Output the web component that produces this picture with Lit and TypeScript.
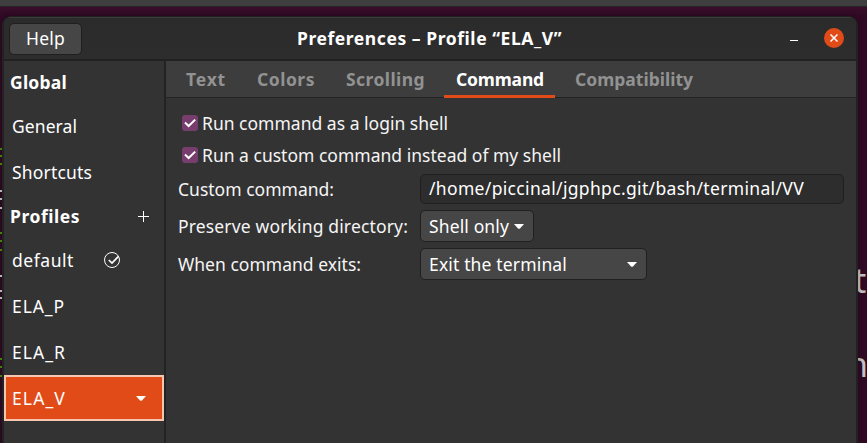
import { LitElement, html, css, svg } from "lit";
import { customElement, property } from "lit/decorators.js";

/** Single-line label whose tracking is adjusted to fill a given width. */
@customElement("fit-label")
class FitLabel extends LitElement {
  @property() text = "";
  @property({ type: Number }) width = 0;
  static styles = css`
    :host { display: inline-block; white-space: pre; flex: none; }
  `;
  async updated() {
    await document.fonts.ready;
    const s = this.renderRoot.querySelector("span") as HTMLElement;
    s.style.letterSpacing = "0";
    const natural = s.getBoundingClientRect().width;
    s.style.letterSpacing = (this.width - natural) / this.text.length + "px";
  }
  render() {
    return html`<span>${this.text}</span>`;
  }
}

const label = (text: string, width: number) =>
  html`<fit-label .text=${text} .width=${width}></fit-label>`;

const caret = html`<svg class="caret" width="10" height="5" viewBox="0 0 10 5">
  ${svg`<path d="M0 0H10L6 4.4Q5 5.2 4 4.4Z" fill="#fff"/>`}
</svg>`;

const tick = html`<svg class="tick" width="16" height="16" viewBox="0 0 16 16">
  <path d="M3 7.5L6.6 11L13.2 4.6" fill="none" stroke="#fff" stroke-width="2"/>
</svg>`;

@customElement("app-root")
class AppRoot extends LitElement {
  static styles = css`
    :host {
      display: block; position: relative; width: 867px; height: 443px; overflow: hidden;
      background: #300a24; color: #fff;
      font: 17.5px/24px "Noto Sans", "Open Sans", sans-serif;
    }
    * { box-sizing: border-box; }
    svg { display: block; flex: none; }
    .topbar { height: 7px; background: #3e3e3e; border-bottom: 1px solid #252525; }
    .shade { height: 9px; background: linear-gradient(#390d2b, #300a24); }
    .behind { position: absolute; color: #c4c0c3; font-size: 34px; line-height: 40px; }
    .t { left: 854px; top: 260px; }
    .n { left: 847px; top: 344px; }
    .dash { position: absolute; left: 0; width: 2px; height: 2px; background: #b9b4b8; }
    .dash.g { background: #458009; }
    .window {
      position: relative; width: 856px; height: 427px; margin-left: 2px;
      display: flex; flex-direction: column;
      border: 2px solid #222; border-top: 1px solid #202020; border-bottom: 0;
      border-radius: 9px 9px 0 0; background: #333; overflow: hidden;
      box-shadow: 0 0 5px rgba(0, 0, 0, .3);
    }
    .header {
      height: 44px; flex: none; display: flex; align-items: center;
      background: linear-gradient(#2b2b2b, #2d2d2d);
      border-top: 1px solid #3b3b3b; border-bottom: 2px solid #212121;
      padding: 0 12px 0 5px;
    }
    .help {
      width: 73px; height: 32px; padding: 0 0 2px 16px;
      display: flex; align-items: center;
      border: 1px solid #1f1f1f; border-radius: 5px; background: #464646;
    }
    .title { margin-left: 215px; padding-bottom: 2px; font-weight: 700; display: flex; }
    .min { width: 8px; height: 1px; background: #fff; margin: 4px 0 0 auto; }
    .close {
      width: 20px; height: 20px; margin: 0 0 1px 26px; border-radius: 50%;
      background: #e14b18; display: grid; place-items: center;
    }
    .body { flex: 1; display: flex; min-height: 0; }
    .side { width: 162px; flex: none; border-right: 2px solid #232323; }
    .head { height: 42px; padding-left: 6px; display: flex; align-items: center; font-weight: 700; }
    .head.add { padding-right: 14px; justify-content: space-between; }
    .head svg { margin-top: 2px; }
    .row { height: 46px; padding-left: 8px; display: flex; align-items: center; }
    .row.sel { background: #e14b18; border: 2px solid #f6c6b1; padding: 0 16px 0 6px; justify-content: space-between; }
    .def { margin-left: 30px; }
    .main { flex: 1; }
    .tabs {
      display: flex; gap: 8px; height: 37px; padding-left: 8px;
      background: #3d3d3d; border-bottom: 1px solid #232323;
    }
    .tab { height: 37px; padding: 0 11px 2px 12px; display: flex; align-items: center; font-weight: 700; color: #929292; }
    .tab.on { color: #fff; box-shadow: inset 0 -3px #e14b18; }
    .check { display: flex; align-items: center; gap: 4px; height: 32px; padding-left: 4px; }
    .tick { background: #763d6d; border-radius: 3px; }
    .form { padding: 9px 12px 0; color: #f5f5f5; }
    .grid { display: grid; grid-template-columns: 242px 1fr; row-gap: 6px; margin-top: 3px; align-items: center; }
    .entry {
      height: 30px; width: 424px; padding: 0 0 2px 8px; display: flex; align-items: center;
      background: #2d2d2d; border: 1px solid #202020; border-radius: 5px; color: #fff;
    }
    .combo {
      height: 32px; width: 114px; padding: 0 9px 0 8px; display: flex; align-items: center; justify-content: space-between;
      background: #464646; border: 1px solid #202020; border-radius: 5px; color: #fff;
    }
    .wide { width: 227px; }
  `;

  render() {
    const tabs: [string, number][] = [
      ["Text", 40], ["Colors", 58], ["Scrolling", 79], ["Command", 88], ["Compatibility", 118],
    ];
    const dashes = [[148, 1], [155, 1], [163, 1], [190, 0], [198, 0], [207, 0], [232, 1], [240, 1], [249, 1], [275, 0], [290, 0], [297, 0], [358, 1], [366, 1], [375, 1]];
    return html`
      <div class="topbar"></div>
      <div class="shade"></div>
      <span class="behind t">t</span><span class="behind n">n</span>
      <div class="window">
        <div class="header">
          <div class="help">${label("Help", 39)}</div>
          <div class="title">${label("Preferences – Profile “ELA_V”", 265)}</div>
          <div class="min"></div>
          <div class="close">
            <svg width="8" height="8" viewBox="0 0 8 8"><path d="M.5 .5L7.5 7.5M7.5 .5L.5 7.5" stroke="#fff" stroke-width="1.5"/></svg>
          </div>
        </div>
        <div class="body">
          <div class="side">
            <div class="head">${label("Global", 57)}</div>
            <div class="row">${label("General", 65)}</div>
            <div class="row">${label("Shortcuts", 80)}</div>
            <div class="head add">${label("Profiles", 70)}
              <svg width="12" height="12" viewBox="0 0 12 12"><path d="M5.5 0V11M0 5.5H11" stroke="#fff"/></svg>
            </div>
            <div class="row">${label("default", 62)}
              <svg class="def" width="16" height="16" viewBox="0 0 16 16" fill="none" stroke="#fff">
                <circle cx="8" cy="8" r="7.5"/><path d="M4.8 8L8 11L14.2 4.6" stroke-width="1.7"/>
              </svg>
            </div>
            <div class="row">${label("ELA_P", 53)}</div>
            <div class="row">${label("ELA_R", 54)}</div>
            <div class="row sel">${label("ELA_V", 54)}${caret}</div>
          </div>
          <div class="main">
            <div class="tabs">
              ${tabs.map(([t, w], i) => html`<div class="tab ${i === 3 ? "on" : ""}">${label(t, w)}</div>`)}
            </div>
            <div class="form">
              <div class="check">${tick}${label("Run command as a login shell", 246)}</div>
              <div class="check">${tick}${label("Run a custom command instead of my shell", 359)}</div>
              <div class="grid">
                ${label("Custom command:", 156)}
                <div class="entry">${label("/home/piccinal/jgphpc.git/bash/terminal/VV", 375)}</div>
                ${label("Preserve working directory:", 230)}
                <div class="combo">${label("Shell only", 80)}${caret}</div>
                ${label("When command exits:", 183)}
                <div class="combo wide">${label("Exit the terminal", 138)}${caret}</div>
              </div>
            </div>
          </div>
        </div>
      </div>
      ${dashes.map(([y, g]) => html`<i class="dash ${g ? "g" : ""}" style="top:${y}px"></i>`)}
    `;
  }
}
